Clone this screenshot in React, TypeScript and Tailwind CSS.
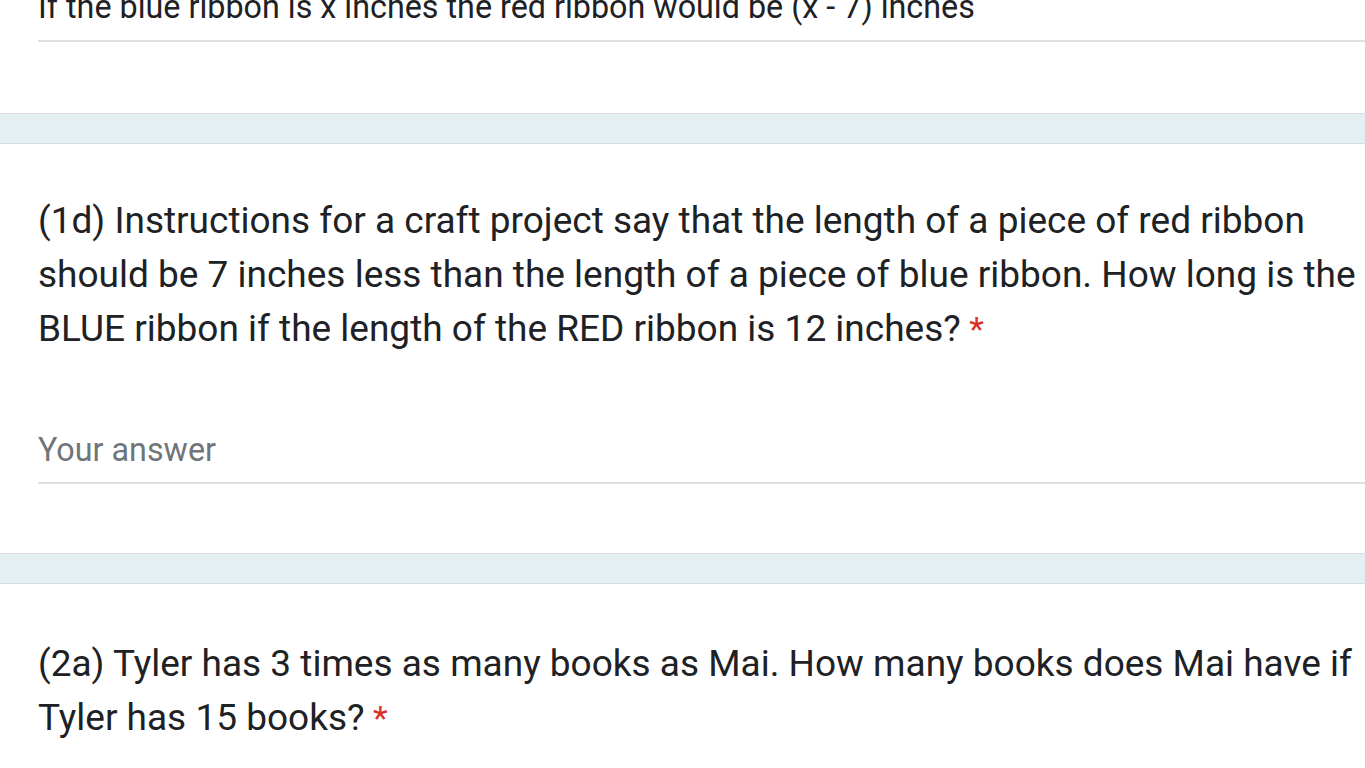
const font = { fontFamily: "Roboto, 'Liberation Sans', sans-serif" };

function Band() {
  return <div className="h-[29px] bg-[#e3eff0] border-y border-[#dadce0] box-content" />;
}

function Question({ text }: { text: string }) {
  return (
    <div className="text-[37px] leading-[54px] text-[#202124]">
      {text}
      <span className="text-[#d93025] text-[34px]"> *</span>
    </div>
  );
}

function AnswerLine({ value, placeholder }: { value?: string; placeholder?: boolean }) {
  return (
    <div>
      <div
        className={`h-[32px] leading-[32px] text-[32.3px] whitespace-nowrap ${
          placeholder ? "text-[#70757a]" : "text-[#202124]"
        }`}
      >
        {value}
      </div>
      <div className="mt-[16px] h-[2px] bg-[#e0e0e0]" />
    </div>
  );
}

export default function App() {
  return (
    <div className="h-screen bg-[#e3eff0] overflow-hidden" style={font}>
      {/* previous question, scrolled mostly out of view */}
      <div className="bg-white h-[113px] overflow-hidden">
        <div className="pl-[38px] -mt-[9px]">
          <div className="h-[32px] leading-[32px] text-[32.3px] text-[#202124] whitespace-nowrap">
            If the blue ribbon is x inches the red ribbon would be (x - 7) inches
          </div>
          <div className="mt-[17px] h-[2px] bg-[#e0e0e0]" />
        </div>
      </div>
      <Band />

      <div className="bg-white pl-[38px] pt-[50px] pb-[69px]">
        <Question text="(1d) Instructions for a craft project say that the length of a piece of red ribbon should be 7 inches less than the length of a piece of blue ribbon. How long is the BLUE ribbon if the length of the RED ribbon is 12 inches?" />
        <div className="mt-[78px]">
          <AnswerLine value="Your answer" placeholder />
        </div>
      </div>
      <Band />

      <div className="bg-white pl-[38px] pt-[53px] pb-[23px]">
        <Question text="(2a) Tyler has 3 times as many books as Mai. How many books does Mai have if Tyler has 15 books?" />
      </div>
    </div>
  );
}
